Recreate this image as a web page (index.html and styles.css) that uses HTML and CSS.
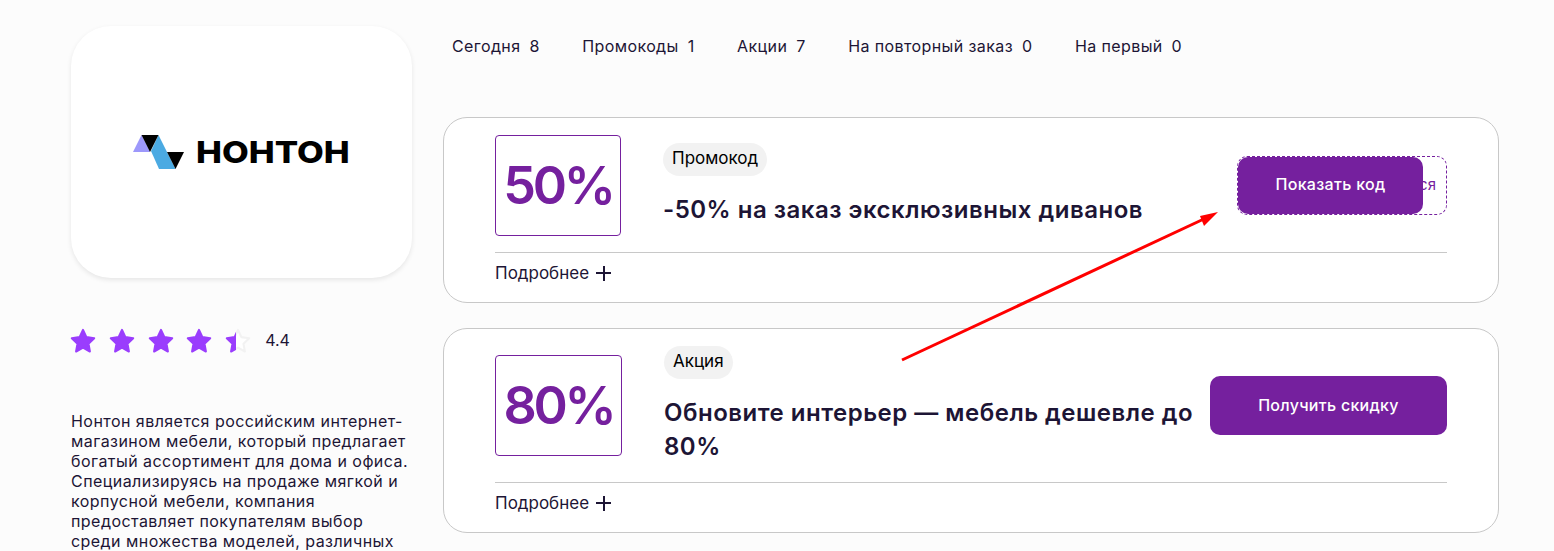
FILE: index.html
```html
<!DOCTYPE html>
<html lang="ru">
<head>
    <meta charset="UTF-8">
    <meta name="viewport" content="width=device-width, initial-scale=1.0">
    <title>Промокоды Нонтон</title>
    <link rel="stylesheet" href="styles.css">
</head>

<body>
    <div class="page">
        <!-- Shop info -->
        <aside class="sidebar">
            <div class="logo-card">
                <svg class="logo-mark" width="52" height="34" viewBox="0 0 52 34">
                    <polygon points="0,17 8.5,0 17,17" fill="#9d98fb"/>
                    <polygon points="18,16 25.5,0 42.5,34 26,34" fill="#4baae2"/>
                    <polygon points="8.5,0 25.5,0 17,17" fill="#000"/>
                    <polygon points="34,17 51,17 42.5,34" fill="#000"/>
                </svg>
                <span class="logo-name">НОНТОН</span>
            </div>

            <div class="rating">
                <svg width="0" height="0" class="defs">
                    <defs>
                        <path id="star" d="M12 2.5l2.9 6.2 6.7.9-4.9 4.7 1.2 6.7-5.9-3.3-5.9 3.3 1.2-6.7-4.9-4.7 6.7-.9z"/>
                        <linearGradient id="partial-fill">
                            <stop offset="42%" stop-color="#9a3dfd"/>
                            <stop offset="42%" stop-color="#fff"/>
                        </linearGradient>
                        <linearGradient id="partial-line">
                            <stop offset="42%" stop-color="#9a3dfd"/>
                            <stop offset="42%" stop-color="#f2f2f2"/>
                        </linearGradient>
                    </defs>
                </svg>
                <svg class="star" viewBox="0 0 24 24"><use href="#star"/></svg>
                <svg class="star" viewBox="0 0 24 24"><use href="#star"/></svg>
                <svg class="star" viewBox="0 0 24 24"><use href="#star"/></svg>
                <svg class="star" viewBox="0 0 24 24"><use href="#star"/></svg>
                <svg class="star star-partial" viewBox="0 0 24 24"><use href="#star"/></svg>
                <span class="rating-value">4.4</span>
            </div>

            <p class="about">Нонтон является российским интернет-магазином мебели, который предлагает богатый ассортимент для дома и офиса. Специализируясь на продаже мягкой и корпусной мебели, компания предоставляет покупателям выбор среди множества моделей, различных</p>
        </aside>

        <main class="content">
            <nav class="tabs">
                <a class="tab">Сегодня <span class="count">8</span></a>
                <a class="tab">Промокоды <span class="count">1</span></a>
                <a class="tab">Акции <span class="count">7</span></a>
                <a class="tab">На повторный заказ <span class="count">0</span></a>
                <a class="tab">На первый <span class="count">0</span></a>
            </nav>

            <!-- Promo code -->
            <section class="deal">
                <div class="deal-row">
                    <div class="discount">50%</div>
                    <div class="deal-text">
                        <span class="chip">Промокод</span>
                        <h3 class="deal-title">-50% на заказ эксклюзивных диванов</h3>
                    </div>
                    <div class="code-box">
                        <span class="code-hidden">Воспользоваться</span>
                        <button class="btn btn-code" type="button">Показать код</button>
                    </div>
                </div>
                <div class="more">Подробнее <span class="plus"></span></div>
            </section>

            <!-- Sale -->
            <section class="deal">
                <div class="deal-row deal-row-tall">
                    <div class="discount discount-wide">80%</div>
                    <div class="deal-text">
                        <span class="chip">Акция</span>
                        <h3 class="deal-title">Обновите интерьер — мебель дешевле до 80%</h3>
                    </div>
                    <button class="btn btn-sale" type="button">Получить скидку</button>
                </div>
                <div class="more">Подробнее <span class="plus"></span></div>
            </section>
        </main>

        <!-- Annotation drawn on top of the screenshot -->
        <svg class="arrow" width="1554" height="551" viewBox="0 0 1554 551">
            <line x1="902" y1="360" x2="1206" y2="218" stroke="#f00" stroke-width="3"/>
            <polygon points="1218,212 1200,216 1204,226" fill="#f00"/>
        </svg>
    </div>
</body>

</html>
```

FILE: styles.css
```css
/* General Styles */
html,
body {
    height: 100%;
    overflow: hidden;
}

body {
    font-family: Inter, "Noto Sans", sans-serif;
    font-size: 16px;
    margin: 0;
    padding: 0;
    background-color: #fcfcfc;
    color: #1d1535;
}

.page {
    position: relative;
    display: flex;
    gap: 31px;
    padding: 26px 55px 0 71px;
}

/* Sidebar */
.sidebar {
    width: 341px;
    flex-shrink: 0;
}

.logo-card {
    display: flex;
    justify-content: center;
    align-items: center;
    height: 252px;
    background-color: white;
    border-radius: 40px;
    box-shadow: 0 2px 5px rgba(0, 0, 0, 0.09);
}

.logo-mark {
    margin-right: 11px;
    margin-top: -1px;
}

.logo-name {
    display: inline-block;
    width: 154px;
    font-size: 30px;
    font-weight: 800;
    line-height: 34px;
    white-space: nowrap;
    color: #000;
    transform: scaleX(1.155);
    transform-origin: left center;
}

.rating {
    display: flex;
    align-items: center;
    margin-top: 49px;
    height: 28px;
}

.defs {
    position: absolute;
}

.star {
    width: 28px;
    height: 28px;
    margin-left: -2px;
    margin-right: 12.8px;
    fill: #9a3dfd;
    stroke: #9a3dfd;
    stroke-width: 1.8;
    stroke-linejoin: round;
}

.star-partial {
    fill: url(#partial-fill);
    stroke: url(#partial-line);
    margin-right: 13px;
}

.rating-value {
    font-size: 16px;
    margin-top: -2px;
}

.about {
    margin: 56px 0 0;
    font-size: 16px;
    line-height: 20px;
    letter-spacing: 0.45px;
}

/* Main column */
.content {
    width: 1056px;
    flex-shrink: 0;
}

.tabs {
    display: flex;
    gap: 42.5px;
    align-items: center;
    height: 40px;
    padding-left: 9px;
    margin-bottom: 51px;
    letter-spacing: 0.4px;
}

.count {
    margin-left: 4px;
}

.deal {
    background-color: white;
    border: 1px solid #c8c8c8;
    border-radius: 24px;
    padding: 17px 51px 0;
    margin-bottom: 25px;
}

.deal-row {
    display: flex;
    align-items: center;
    padding-bottom: 16px;
    border-bottom: 1px solid #c8c8c8;
}

.deal-row-tall {
    padding-bottom: 17px;
}

.discount {
    display: flex;
    justify-content: center;
    align-items: center;
    box-sizing: border-box;
    width: 126px;
    height: 101px;
    flex-shrink: 0;
    margin-right: 42px;
    border: 1px solid #75209e;
    border-radius: 4px;
    font-size: 52px;
    font-weight: 570;
    letter-spacing: -3.2px;
    color: #75209e;
}

.discount-wide {
    width: 127px;
}

.deal-text {
    flex: 1;
}

.chip {
    display: inline-block;
    padding: 0 9px;
    height: 33px;
    line-height: 31px;
    background-color: #f2f2f2;
    border-radius: 17px;
    font-size: 17px;
    color: #000;
}

.deal-title {
    margin: 17px 0 1px;
    font-size: 24px;
    font-weight: 600;
    line-height: 34px;
    letter-spacing: 0.5px;
}

.btn {
    height: 58px;
    border: none;
    border-radius: 10px;
    background-color: #75209e;
    color: white;
    font-family: inherit;
    font-size: 16px;
    font-weight: 500;
    letter-spacing: 0.3px;
}

.btn-sale {
    width: 237px;
    height: 59px;
    flex-shrink: 0;
    margin-left: 10px;
    padding-bottom: 2px;
}

.code-box {
    position: relative;
    box-sizing: border-box;
    width: 210px;
    height: 59px;
    flex-shrink: 0;
    border: 1px dashed #75209e;
    border-radius: 10px;
    text-align: right;
    padding-right: 10px;
    line-height: 55px;
    font-size: 15px;
    white-space: nowrap;
    color: #75209e;
}

.btn-code {
    position: absolute;
    left: 0;
    top: 0;
    width: 185px;
    height: 57px;
    padding-bottom: 4px;
}

.more {
    display: flex;
    align-items: center;
    box-sizing: border-box;
    height: 41px;
    padding-bottom: 1px;
    margin-bottom: 8px;
    font-size: 17px;
}

.plus {
    width: 15px;
    height: 15px;
    margin-left: 7px;
    background:
        linear-gradient(#1d1535, #1d1535) center / 15px 2px no-repeat,
        linear-gradient(#1d1535, #1d1535) center / 2px 15px no-repeat;
}

.arrow {
    position: absolute;
    left: 0;
    top: 0;
    pointer-events: none;
}
```
